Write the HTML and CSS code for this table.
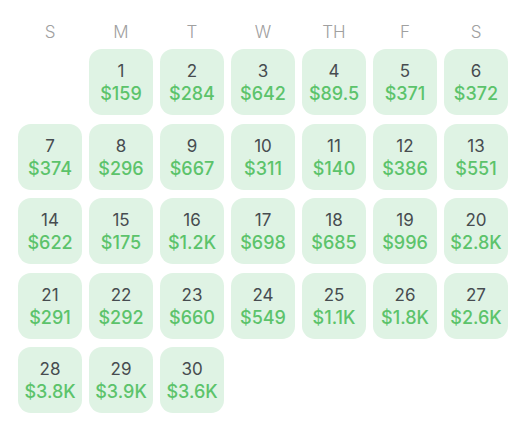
FILE: index.html
```html
<!DOCTYPE html>
<html lang="en">
<head>
  <meta charset="UTF-8" />
  <meta name="viewport" content="width=device-width, initial-scale=1.0" />
  <title>Monthly Sales</title>
  <link rel="stylesheet" href="styles.css">
</head>
<body>
  <div class="calendar">
    <div class="weekdays">
      <div>S</div><div>M</div><div>T</div><div>W</div><div>TH</div><div>F</div><div>S</div>
    </div>
    <div class="days">
      <div class="empty"></div>
      <div class="day"><span class="num">1</span><span class="amt">$159</span></div>
      <div class="day"><span class="num">2</span><span class="amt">$284</span></div>
      <div class="day"><span class="num">3</span><span class="amt">$642</span></div>
      <div class="day"><span class="num">4</span><span class="amt">$89.5</span></div>
      <div class="day"><span class="num">5</span><span class="amt">$371</span></div>
      <div class="day"><span class="num">6</span><span class="amt">$372</span></div>

      <div class="day"><span class="num">7</span><span class="amt">$374</span></div>
      <div class="day"><span class="num">8</span><span class="amt">$296</span></div>
      <div class="day"><span class="num">9</span><span class="amt">$667</span></div>
      <div class="day"><span class="num">10</span><span class="amt">$311</span></div>
      <div class="day"><span class="num">11</span><span class="amt">$140</span></div>
      <div class="day"><span class="num">12</span><span class="amt">$386</span></div>
      <div class="day"><span class="num">13</span><span class="amt">$551</span></div>

      <div class="day"><span class="num">14</span><span class="amt">$622</span></div>
      <div class="day"><span class="num">15</span><span class="amt">$175</span></div>
      <div class="day"><span class="num">16</span><span class="amt">$1.2K</span></div>
      <div class="day"><span class="num">17</span><span class="amt">$698</span></div>
      <div class="day"><span class="num">18</span><span class="amt">$685</span></div>
      <div class="day"><span class="num">19</span><span class="amt">$996</span></div>
      <div class="day"><span class="num">20</span><span class="amt">$2.8K</span></div>

      <div class="day"><span class="num">21</span><span class="amt">$291</span></div>
      <div class="day"><span class="num">22</span><span class="amt">$292</span></div>
      <div class="day"><span class="num">23</span><span class="amt">$660</span></div>
      <div class="day"><span class="num">24</span><span class="amt">$549</span></div>
      <div class="day"><span class="num">25</span><span class="amt">$1.1K</span></div>
      <div class="day"><span class="num">26</span><span class="amt">$1.8K</span></div>
      <div class="day"><span class="num">27</span><span class="amt">$2.6K</span></div>

      <div class="day"><span class="num">28</span><span class="amt">$3.8K</span></div>
      <div class="day"><span class="num">29</span><span class="amt">$3.9K</span></div>
      <div class="day"><span class="num">30</span><span class="amt">$3.6K</span></div>
    </div>
  </div>
</body>
</html>
```
FILE: styles.css
```css
body {
  margin: 0;
  background: #ffffff;
  font-family: Inter, "Liberation Sans", sans-serif;
}
.calendar {
  padding: 20px 0 0 18px;
}
.weekdays,
.days {
  display: grid;
  grid-template-columns: repeat(7, 64px);
  column-gap: 7px;
}
.weekdays {
  height: 24px;
  margin-bottom: 5px;
}
.weekdays div {
  text-align: center;
  font-size: 17px;
  font-weight: 300;
  line-height: 24px;
  color: #a0a0a0;
}
.days {
  grid-auto-rows: 66px;
  row-gap: 8.5px;
}
.day {
  display: flex;
  flex-direction: column;
  align-items: center;
  justify-content: center;
  background: #dff3e4;
  border-radius: 13px;
}
.num {
  font-size: 17px;
  line-height: 21px;
  color: #474c50;
  margin-top: 2px;
}
.amt {
  font-size: 18px;
  font-weight: 500;
  line-height: 23px;
  color: #5cc36b;
}
```
